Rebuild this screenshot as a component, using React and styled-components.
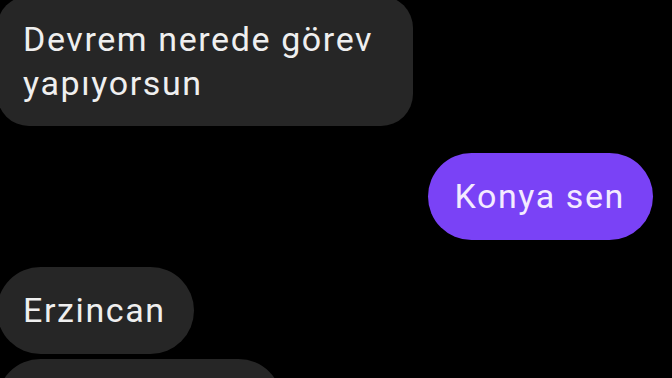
import React from 'react'
import styled, { createGlobalStyle } from 'styled-components'

const GlobalStyle = createGlobalStyle`
  html, body {
    margin: 0;
    padding: 0;
    background: #000;
    overflow: hidden;
  }
`

const Screen = styled.div`
  width: 672px;
  height: 378px;
  background: #000;
  overflow: hidden;
  font-family: Roboto, "Noto Sans", sans-serif;
`

const Thread = styled.div`
  display: flex;
  flex-direction: column;
  margin-top: -4px;
  padding: 0 19px 0 0;
  margin-left: -3px;
`

const Bubble = styled.div`
  align-self: ${p => (p.mine ? 'flex-end' : 'flex-start')};
  max-width: 416px;
  min-height: 87px;
  box-sizing: border-box;
  padding: 21px 28px 21px 26px;
  margin-top: ${p => (p.grouped ? '5px' : '27px')};
  border-radius: ${p => (p.multi ? '32px' : '44px')};
  background: ${p => (p.mine ? '#7a42f6' : '#262626')};
  color: ${p => (p.mine ? '#f4ebff' : '#efefef')};
  font-size: 34px;
  line-height: 44px;
  letter-spacing: 1.6px;

  &:first-child {
    margin-top: 0;
  }
`

// the next bubble only peeks in at the bottom edge, its text is below the crop
const PeekBubble = styled(Bubble)`
  width: ${p => p.w}px;
`

export default function App() {
    // Chat thread, cropped from a phone screenshot.
    return (
        <Screen>
            <GlobalStyle />
            <Thread>
                <Bubble multi>Devrem nerede görev yapıyorsun</Bubble>
                <Bubble mine>Konya sen</Bubble>
                <Bubble>Erzincan</Bubble>
                <PeekBubble grouped w={285} aria-hidden="true" />
            </Thread>
        </Screen>
    )
}
